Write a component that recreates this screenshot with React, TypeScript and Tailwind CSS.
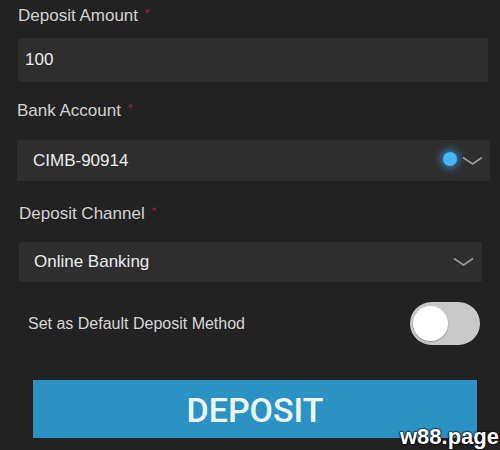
import { useState } from "react";

function Chevron() {
  return (
    <svg width="21" height="10" viewBox="0 0 21 10" fill="none">
      <path d="M1 1.5 L10.5 8 L20 1.5" stroke="#9a9a9a" strokeWidth="1.6" />
    </svg>
  );
}

function Label({ text, className }: { text: string; className?: string }) {
  return (
    <div className={"flex items-start h-5 leading-5 text-[17px] text-[#d2d2d2] " + (className ?? "")}>
      <span>{text}</span>
      <span className="ml-[7px] -mt-[3px] text-[11px] text-[#b0203c]">*</span>
    </div>
  );
}

export default function App() {
  const [isDefault, setIsDefault] = useState(false);

  return (
    <div
      className="relative w-[500px] h-[450px] overflow-hidden bg-[#222222] pt-[6px]"
      style={{ fontFamily: '"Liberation Sans", Arial, sans-serif' }}
    >
      <Label text="Deposit Amount" className="ml-[18px]" />
      <div className="mt-[12px] ml-[18px] mr-[12px] h-[44px] flex items-center px-[7px] bg-[#2e2e2e] rounded-[2px]">
        <span className="text-[17px] text-[#ececec]">100</span>
      </div>

      <Label text="Bank Account" className="mt-[19px] ml-[17px]" />
      <div className="mt-[19px] ml-[17px] mr-[10px] h-[41px] flex items-center pl-[16px] pr-[7px] bg-[#2e2e2e] rounded-[2px]">
        <span className="text-[17px] text-[#ececec]">CIMB-90914</span>
        <span className="ml-auto w-[14px] h-[14px] rounded-full bg-[#45b8f5] shadow-[0_0_7px_3px_rgba(60,170,240,0.55)] -mt-[4px]" />
        <span className="ml-[5px]">
          <Chevron />
        </span>
      </div>

      <Label text="Deposit Channel" className="mt-[23px] ml-[19px]" />
      <div className="mt-[18px] ml-[19px] mr-[18px] h-[40px] flex items-center pl-[15px] pr-[8px] bg-[#2e2e2e] rounded-[2px]">
        <span className="text-[17px] text-[#ececec]">Online Banking</span>
        <span className="ml-auto">
          <Chevron />
        </span>
      </div>

      <div className="mt-[20px] h-[43px] flex items-center pl-[28px] pr-[20px]">
        <span className="text-[16px] text-[#d6d6d6]">Set as Default Deposit Method</span>
        <button
          onClick={() => setIsDefault(!isDefault)}
          className={
            "ml-auto w-[70px] h-[43px] rounded-full flex items-center px-[3px] " +
            (isDefault ? "bg-[#2b93c4] justify-end" : "bg-[#c9c9c9] justify-start")
          }
        >
          <span className="w-[35px] h-[35px] rounded-full bg-white shadow-[0_1px_2px_rgba(0,0,0,0.25)]" />
        </button>
      </div>

      <button
        className="mt-[35px] ml-[33px] w-[444px] h-[58px] flex items-center justify-center bg-[#2b93c4] pt-[3px]"
        style={{ fontFamily: "Roboto, sans-serif" }}
      >
        <span className="text-[34px] font-medium text-[#eef8fc]">DEPOSIT</span>
      </button>

      <div
        className="absolute right-[1px] bottom-[2px] text-[22px] font-bold leading-none text-white"
        style={{ fontFamily: '"Liberation Sans", Arial, sans-serif', textShadow: "0 0 2px #000, 0 0 2px #000, 0 0 1px #000" }}
      >
        w88.page
      </div>
    </div>
  );
}
